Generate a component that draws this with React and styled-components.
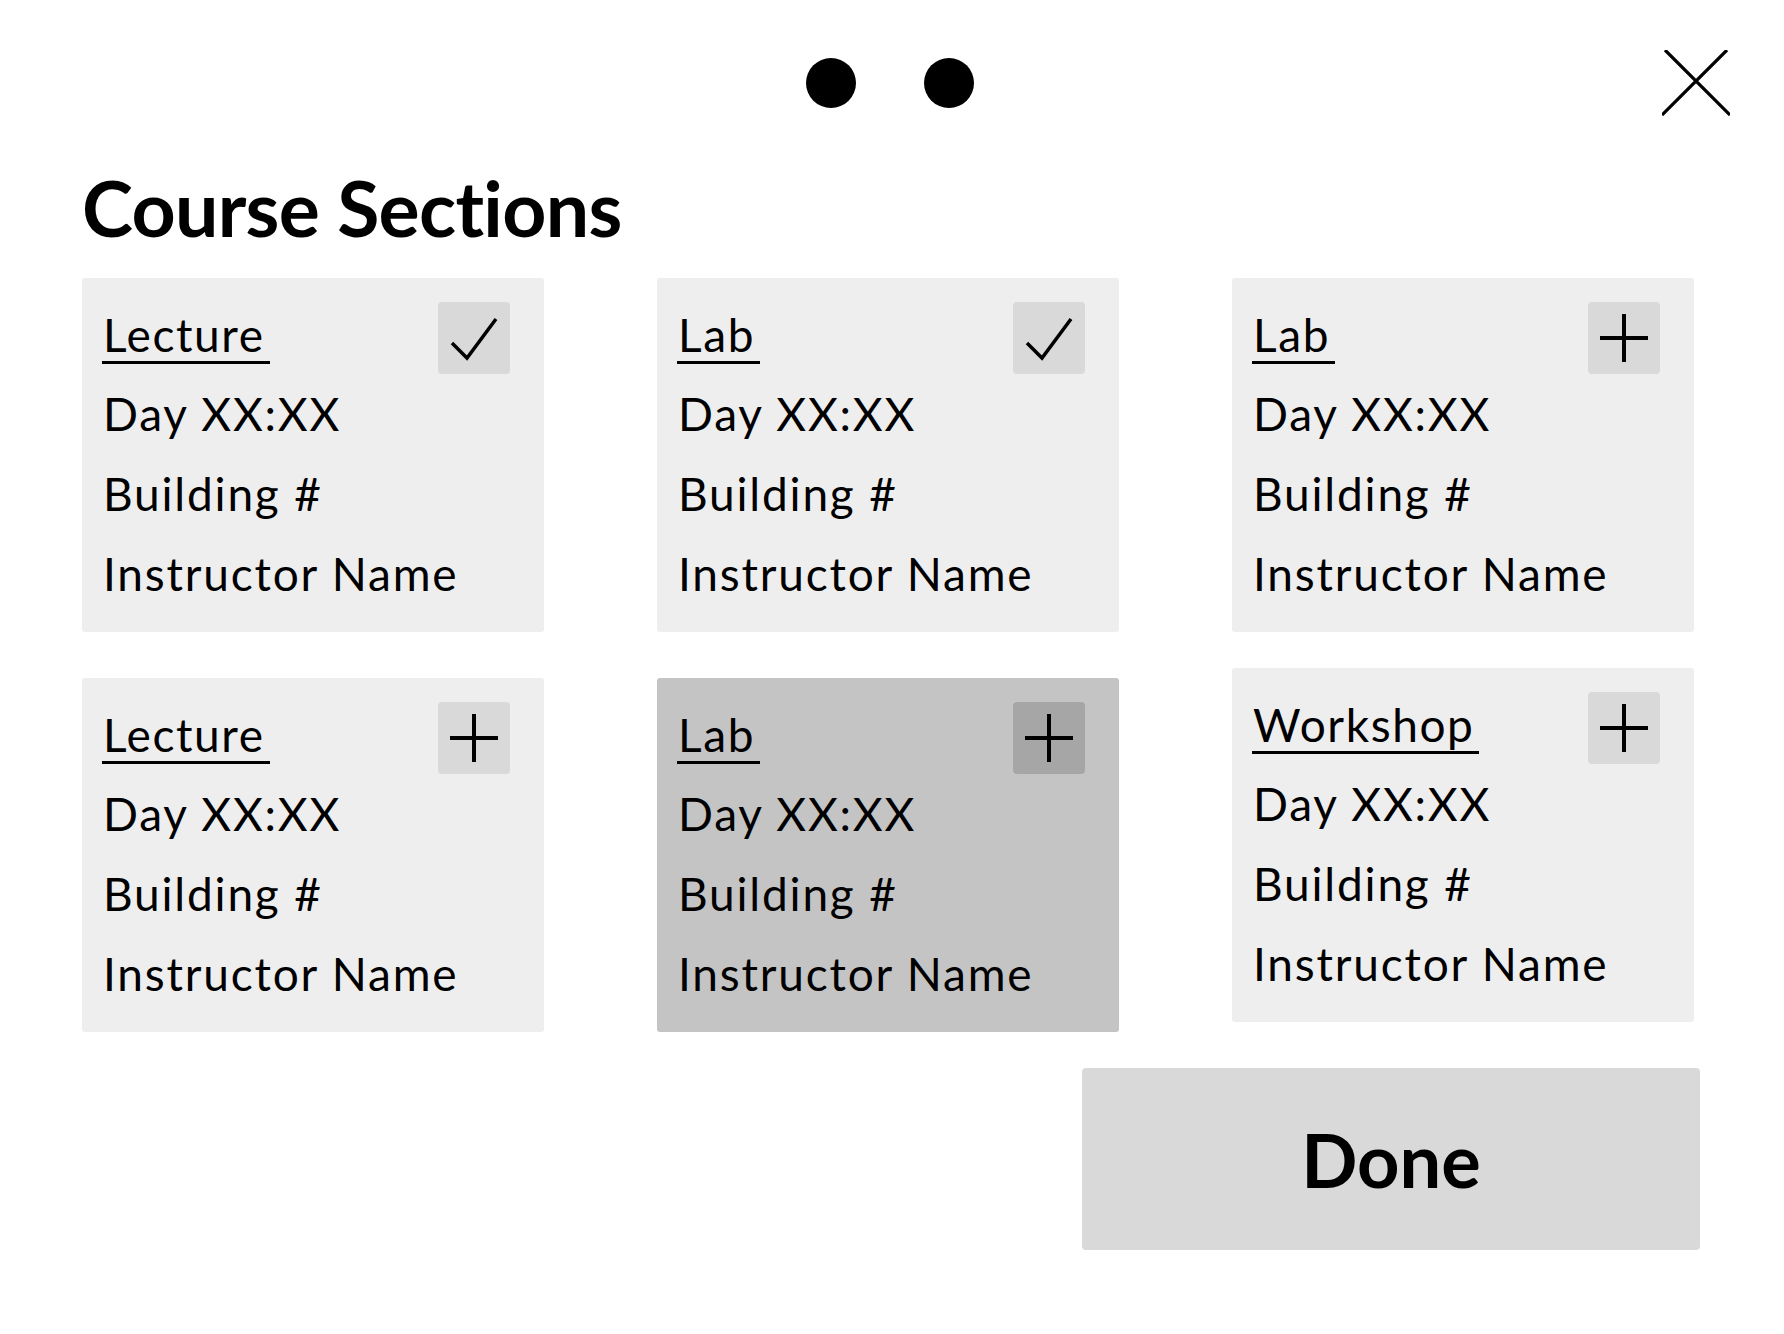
import React from "react";
import styled, { createGlobalStyle } from "styled-components";

const GlobalStyle = createGlobalStyle`
    html, body {
        margin: 0;
        padding: 0;
        background: #ffffff;
    }

    body {
        font-family: Lato, "Noto Sans", sans-serif;
        color: #000000;
    }
`

const Page = styled.main`
    width: 1784px;
    min-height: 1334px;
    box-sizing: border-box;
    background: #ffffff;
`

const Header = styled.header`
    display: grid;
    grid-template-columns: 1fr auto 1fr;
    align-items: center;
    height: 66px;
    padding: 50px 54px 0;
`

const Dots = styled.div`
    grid-column: 2;
    display: flex;
    gap: 68px;
    margin-right: 4px;
`

const Dot = styled.span`
    width: 50px;
    height: 50px;
    border-radius: 50%;
    background: #000000;
`

const CloseButton = styled.button`
    grid-column: 3;
    justify-self: end;
    display: flex;
    padding: 0;
    border: none;
    background: none;
    cursor: pointer;
`

const Title = styled.h1`
    margin: 53px 0 0 82px;
    font-size: 77px;
    line-height: 1;
    font-weight: 700;
    letter-spacing: -0.7px;
`

const Grid = styled.section`
    display: grid;
    grid-template-columns: repeat(3, 462px);
    column-gap: 113px;
    row-gap: 46px;
    align-items: start;
    margin-top: 32px;
    padding-left: 82px;
`

const Card = styled.article`
    box-sizing: border-box;
    height: 354px;
    padding: 24px 34px 18px 20px;
    border-radius: 3px;
    background: ${p => (p.$active ? "#c4c4c4" : "#eeeeee")};
    margin-top: ${p => (p.$raised ? "-10px" : "0")};
`

const CardHead = styled.div`
    display: flex;
    justify-content: space-between;
    align-items: center;
    height: 72px;
`

const Kind = styled.span`
    display: inline-block;
    font-size: 46px;
    line-height: 1;
    letter-spacing: 1.6px;
    padding: 0 5px 3px 1px;
    border-bottom: 3px solid #000000;
`

const IconBox = styled.button`
    display: flex;
    align-items: center;
    justify-content: center;
    width: 72px;
    height: 72px;
    padding: 0;
    border: none;
    border-radius: 4px;
    background: ${p => (p.$active ? "#a6a6a6" : "#d9d9d9")};
    cursor: pointer;
`

const Line = styled.div`
    font-size: 46px;
    line-height: 80px;
    letter-spacing: 1.8px;
    padding-left: 1px;
    white-space: nowrap;
`

const Footer = styled.div`
    display: flex;
    justify-content: flex-end;
    margin-top: 36px;
    padding-right: 84px;
`

const DoneButton = styled.button`
    width: 618px;
    height: 182px;
    border: none;
    border-radius: 4px;
    background: #d9d9d9;
    font-family: Lato, "Noto Sans", sans-serif;
    font-size: 74px;
    font-weight: 700;
    color: #000000;
    cursor: pointer;
`

const CheckIcon = () => (
    <svg width="72" height="72" viewBox="0 0 72 72">
        <polyline points="14,41 29,56 58,17" fill="none" stroke="#000" strokeWidth="3.5" />
    </svg>
)

const PlusIcon = () => (
    <svg width="72" height="72" viewBox="0 0 72 72">
        <path d="M12 36 H60 M36 12 V60" fill="none" stroke="#000" strokeWidth="4" />
    </svg>
)

const CloseIcon = () => (
    <svg width="68" height="66" viewBox="0 0 68 66">
        <path d="M3 0 L68 65 M65 0 L0 65" fill="none" stroke="#000" strokeWidth="3.2" />
    </svg>
)

const sections = [
    { kind: "Lecture", added: true },
    { kind: "Lab", added: true },
    { kind: "Lab" },
    { kind: "Lecture" },
    { kind: "Lab", active: true },
    { kind: "Workshop", raised: true },
]

export default function App() {
    return (
        <Page>
            <GlobalStyle />
            <Header>
                <Dots>
                    <Dot />
                    <Dot />
                </Dots>
                <CloseButton aria-label="close">
                    <CloseIcon />
                </CloseButton>
            </Header>

            <Title>Course Sections</Title>

            <Grid>
                {sections.map((s, i) => (
                    <Card key={i} $active={s.active} $raised={s.raised}>
                        <CardHead>
                            <Kind>{s.kind}</Kind>
                            <IconBox $active={s.active}>
                                {s.added ? <CheckIcon /> : <PlusIcon />}
                            </IconBox>
                        </CardHead>
                        <Line>Day XX:XX</Line>
                        <Line>Building #</Line>
                        <Line>Instructor Name</Line>
                    </Card>
                ))}
            </Grid>

            <Footer>
                <DoneButton>Done</DoneButton>
            </Footer>
        </Page>
    )
}
